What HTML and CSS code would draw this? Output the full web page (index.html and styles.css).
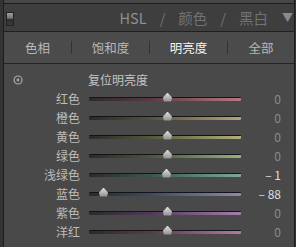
FILE: index.html
```html
<!DOCTYPE html>
<html lang="zh">
<head>
    <meta charset="UTF-8">
    <title>HSL</title>
    <link rel="stylesheet" href="styles.css">
</head>
<body>
    <div class="panel">
        <div class="top-strip"></div>
        <header class="panel-header">
            <span class="switch"></span>
            <h1 class="title">
                <span class="active">HSL</span>
                <span class="slash">/</span>
                <span>颜色</span>
                <span class="slash">/</span>
                <span>黑白</span>
            </h1>
            <span class="collapse">&#9660;</span>
        </header>

        <nav class="tabs">
            <span class="tab">色相</span>
            <span class="tab">饱和度</span>
            <span class="tab selected">明亮度</span>
            <span class="tab">全部</span>
        </nav>

        <div class="content">
            <div class="reset-row">
                <span class="target">
                    <svg width="10" height="10" viewBox="0 0 10 10">
                        <circle cx="5" cy="5" r="4" fill="none" stroke="#a8a8a8" stroke-width="1.2"/>
                        <circle cx="5" cy="5" r="1.4" fill="#a8a8a8"/>
                    </svg>
                </span>
                <span class="reset-label">复位明亮度</span>
            </div>

            <div class="slider-row">
                <span class="label">红色</span>
                <div class="track red"><span class="thumb" style="left: 74px"></span></div>
                <span class="value">0</span>
            </div>
            <div class="slider-row">
                <span class="label">橙色</span>
                <div class="track orange"><span class="thumb" style="left: 74px"></span></div>
                <span class="value">0</span>
            </div>
            <div class="slider-row">
                <span class="label">黄色</span>
                <div class="track yellow"><span class="thumb" style="left: 74px"></span></div>
                <span class="value">0</span>
            </div>
            <div class="slider-row">
                <span class="label">绿色</span>
                <div class="track green"><span class="thumb" style="left: 74px"></span></div>
                <span class="value">0</span>
            </div>
            <div class="slider-row">
                <span class="label">浅绿色</span>
                <div class="track aqua"><span class="thumb" style="left: 73px"></span></div>
                <span class="value changed">&ndash; 1</span>
            </div>
            <div class="slider-row">
                <span class="label">蓝色</span>
                <div class="track blue"><span class="thumb" style="left: 10px"></span></div>
                <span class="value changed">&ndash; 88</span>
            </div>
            <div class="slider-row">
                <span class="label">紫色</span>
                <div class="track purple"><span class="thumb" style="left: 74px"></span></div>
                <span class="value">0</span>
            </div>
            <div class="slider-row">
                <span class="label">洋红</span>
                <div class="track magenta"><span class="thumb" style="left: 74px"></span></div>
                <span class="value">0</span>
            </div>
        </div>
    </div>
</body>
</html>
```

FILE: styles.css
```css
body {
    margin: 0;
    background-color: #333333;
    font-family: "Noto Sans CJK SC", "Noto Sans", sans-serif;
    overflow: hidden;
}

.panel {
    width: 290px;
    height: 247px;
    margin-left: 3px;
    border-left: 1px solid #1e1e1e;
    border-right: 1px solid #1e1e1e;
    background-color: #494949;
}

.top-strip {
    height: 3px;
    background-color: #474747;
    border-bottom: 1px solid #1c1c1c;
}

.panel-header {
    height: 27px;
    display: flex;
    align-items: center;
    padding: 0 1px 0 2px;
    background-color: #3e3e3e;
    border-bottom: 1px solid #202020;
}

.switch {
    width: 6px;
    height: 12px;
    margin-top: 2px;
    border: 1px solid #222;
    background: linear-gradient(#a0a0a0 0%, #707070 45%, #2e2e2e 50%, #3a3a3a 100%);
}

.title {
    flex: 1;
    margin: 0;
    display: flex;
    justify-content: flex-end;
    gap: 13px;
    padding-right: 14px;
    font-size: 14.5px;
    font-weight: normal;
    color: #727272;
    line-height: 27px;
}

.title .active {
    color: #8e8e8e;
}

.collapse {
    font-size: 11px;
    color: #8a8a8a;
    line-height: 27px;
}

.tabs {
    height: 31px;
    display: grid;
    grid-template-columns: 68px 78px 78px 1fr;
    align-items: center;
    background-color: #4b4b4b;
    border-bottom: 1px solid #242424;
}

.tab {
    text-align: center;
    font-size: 12.5px;
    color: #b8b8b8;
    border-right: 1px solid #333;
    line-height: 13px;
}

.tab:last-child {
    border-right: none;
}

.tab.selected {
    color: #f4f4f4;
}

.content {
    padding-top: 6px;
}

.reset-row {
    height: 19px;
    display: flex;
    align-items: center;
}

.target {
    width: 10px;
    height: 10px;
    margin-left: 9px;
    display: flex;
}

.reset-label {
    margin-left: 65px;
    font-size: 12px;
    color: #c4c4c4;
}

.slider-row {
    height: 19px;
    display: flex;
    align-items: center;
}

.label {
    width: 76px;
    text-align: right;
    font-size: 12px;
    color: #bcbcbc;
}

.track {
    position: relative;
    width: 152px;
    height: 3px;
    margin-left: 9px;
    border-top: 1px solid #141414;
    border-radius: 1px;
}

.thumb {
    position: absolute;
    top: -5px;
    width: 9px;
    height: 9px;
    background: linear-gradient(#e0e0e0, #8c8c8c);
    clip-path: polygon(50% 0, 100% 55%, 90% 100%, 10% 100%, 0 55%);
}

.value {
    width: 40px;
    text-align: right;
    font-size: 12px;
    color: #8a8a8a;
}

.value.changed {
    color: #dcdcdc;
}

.red { background: linear-gradient(to right, #2a2a2a, #5a3a40 40%, #b57785); }
.orange { background: linear-gradient(to right, #2a2a2a, #56503a 40%, #b0a678); }
.yellow { background: linear-gradient(to right, #2a2a2a, #54563a 40%, #b0b07a); }
.green { background: linear-gradient(to right, #2a2a2a, #48563a 40%, #98b07a); }
.aqua { background: linear-gradient(to right, #2a2a2a, #3a564a 40%, #7aac98); }
.blue { background: linear-gradient(to right, #2a2a2a, #3a4a66 40%, #8a8aa8); }
.purple { background: linear-gradient(to right, #2a2a2a, #4e3a58 40%, #a87ab0); }
.magenta { background: linear-gradient(to right, #2a2a2a, #583a4e 40%, #b07a9c); }
```
